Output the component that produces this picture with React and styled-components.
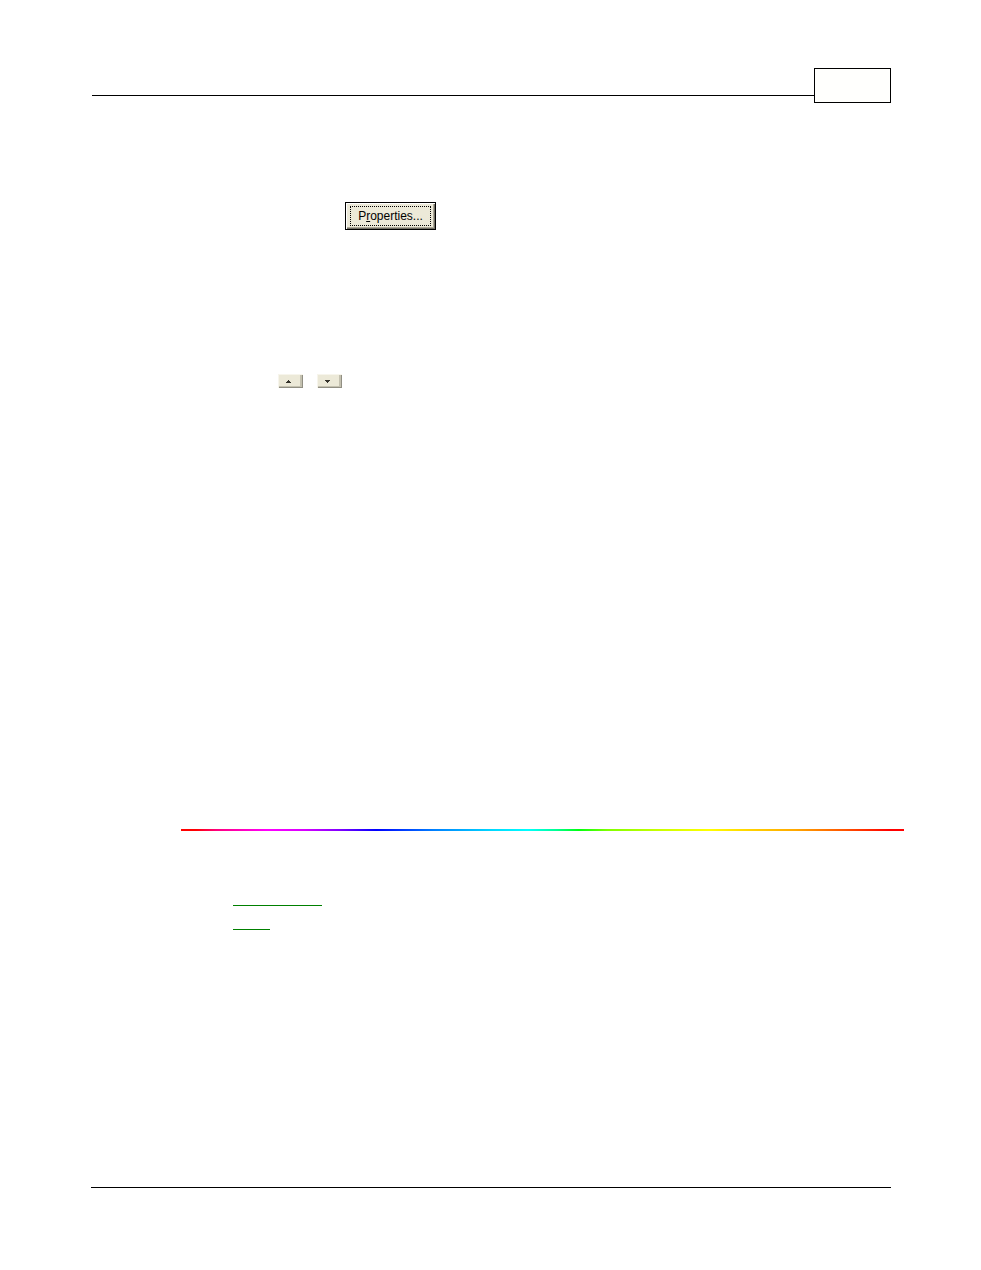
import React from "react";
import styled, { createGlobalStyle } from "styled-components";

const GlobalStyle = createGlobalStyle`
  * { box-sizing: border-box; }
  body {
    margin: 0;
    background: #ffffff;
    font-family: "Liberation Sans", Arial, sans-serif;
  }
`;

const Page = styled.div`
  display: flex;
  flex-direction: column;
  min-height: 100vh;
  padding: 68px 0 82px;
`;

const Header = styled.header`
  display: flex;
  align-items: flex-start;
  margin: 0 90px 0 92px;
`;

const HeaderRule = styled.div`
  flex: 1;
  height: 1px;
  margin-top: 27px;
  background: #000000;
`;

const PageNumberBox = styled.div`
  width: 77px;
  height: 35px;
  border: 1px solid #000000;
  background: #fffffd;
`;

const Main = styled.main`
  flex: 1;
  display: flex;
  flex-direction: column;
  padding: 99px 77px 0 181px;
`;

const PropertiesRow = styled.div`
  display: flex;
  padding-left: 164px;
`;

const PropertiesButton = styled.button`
  display: flex;
  align-items: flex-start;
  width: 91px;
  height: 28px;
  padding: 3px 4px;
  border: 1px solid #000000;
  border-radius: 0;
  background: #ece9d8;
  box-shadow: inset 1px 1px #ffffff, inset -1px -1px #716f64,
    inset -2px -2px #aca899;
  color: #000000;
  font: 12px/18px "Liberation Sans", Arial, sans-serif;
`;

const FocusFrame = styled.span`
  width: 81px;
  height: 20px;
  border: 1px dotted #000000;
  text-align: center;
`;

const ArrowRow = styled.div`
  display: flex;
  gap: 14px;
  margin-top: 144px;
  padding-left: 97px;
`;

const ArrowButton = styled.button`
  display: flex;
  align-items: center;
  justify-content: center;
  width: 25px;
  height: 14px;
  padding: 1px 4px 0 0;
  border: 0;
  background: #ece9d8;
  box-shadow: inset 1px 1px #f7f5ec, inset -1px -1px #918f83,
    inset -3px -2px #c4c1b0;
`;

const Rainbow = styled.hr`
  width: 100%;
  height: 2px;
  margin: 441px 0 0;
  border: 0;
  background: linear-gradient(
    to right,
    #ff0000 0%,
    #ff0000 2%,
    #ff0080 5%,
    #ff00ff 12%,
    #d800ff 17%,
    #8000ff 22%,
    #0000ff 27%,
    #0080ff 35%,
    #00d8ff 43%,
    #00ffff 48%,
    #00ff90 52%,
    #00ff10 55%,
    #80ff00 59%,
    #c8ff00 66%,
    #ffff00 73%,
    #ffd000 79%,
    #ffa800 85%,
    #ff5000 92%,
    #ff0000 98%
  );
`;

const Links = styled.nav`
  display: flex;
  flex-direction: column;
  gap: 8px;
  margin-top: 59px;
  padding-left: 52px;
`;

const TopicLink = styled.a`
  width: ${({ $width }) => $width}px;
  height: 16px;
  border-bottom: 1px solid #008000;
`;

const FooterRule = styled.footer`
  height: 1px;
  margin: 0 90px 0 91px;
  background: #000000;
`;

function Arrow({ down }) {
  return (
    <svg width="5" height="3" viewBox="0 0 5 3" aria-hidden="true">
      <path
        d={down ? "M0 0H5V1H4V2H3V3H2V2H1V1H0Z" : "M0 3H5V2H4V1H3V0H2V1H1V2H0Z"}
        fill="#35332b"
      />
    </svg>
  );
}

export default function App() {
  return (
    <>
      <GlobalStyle />
      <Page>
        <Header>
          <HeaderRule />
          <PageNumberBox />
        </Header>
        <Main>
          <PropertiesRow>
            <PropertiesButton type="button">
              <FocusFrame>
                P<u>r</u>operties...
              </FocusFrame>
            </PropertiesButton>
          </PropertiesRow>
          <ArrowRow>
            <ArrowButton type="button" aria-label="Up">
              <Arrow />
            </ArrowButton>
            <ArrowButton type="button" aria-label="Down">
              <Arrow down />
            </ArrowButton>
          </ArrowRow>
          <Rainbow />
          <Links>
            <TopicLink href="#first" aria-label="First topic" $width={89} />
            <TopicLink href="#second" aria-label="Second topic" $width={37} />
          </Links>
        </Main>
        <FooterRule />
      </Page>
    </>
  );
}
